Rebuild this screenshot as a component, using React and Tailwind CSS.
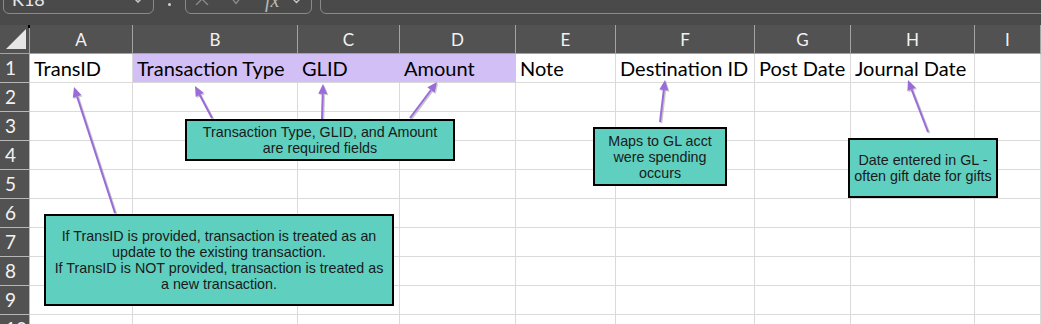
import React from "react";

const cols = [
  { l: "A", w: "w-[103px]", t: "TransID" },
  { l: "B", w: "w-[165px]", t: "Transaction Type", p: true },
  { l: "C", w: "w-[102px]", t: "GLID", p: true },
  { l: "D", w: "w-[116px]", t: "Amount", p: true },
  { l: "E", w: "w-[100px]", t: "Note" },
  { l: "F", w: "w-[139px]", t: "Destination ID" },
  { l: "G", w: "w-[96px]", t: "Post Date" },
  { l: "H", w: "w-[124px]", t: "Journal Date" },
  { l: "I", w: "flex-1", t: "" },
];

const rows = [1, 2, 3, 4, 5, 6, 7, 8, 9, 10];

const arrows = [
  [115, 213, 74, 87],
  [212, 118, 195, 86],
  [322, 119, 323, 84],
  [410, 118, 437, 82],
  [660, 122, 665, 80],
  [928, 132, 908, 80],
];

function Arrow({ a }) {
  const [x1, y1, x2, y2] = a;
  const dx = x2 - x1;
  const dy = y2 - y1;
  const L = Math.hypot(dx, dy);
  const ux = dx / L;
  const uy = dy / L;
  const bx = x2 - ux * 10;
  const by = y2 - uy * 10;
  const px = -uy * 4.5;
  const py = ux * 4.5;
  const pts = `${x2},${y2} ${bx + px},${by + py} ${bx - px},${by - py}`;
  const spts = `${x2 + 1.2},${y2 + 1.2} ${bx + px + 1.2},${by + py + 1.2} ${bx - px + 1.2},${by - py + 1.2}`;
  return (
    <g>
      <line x1={x1 + 1.2} y1={y1 + 1.2} x2={bx + 1.2} y2={by + 1.2} stroke="#9a9a9a" strokeOpacity="0.55" strokeWidth="2.2" />
      <polygon points={spts} fill="#9a9a9a" fillOpacity="0.5" />
      <line x1={x1} y1={y1} x2={bx} y2={by} stroke="#9b6bd9" strokeWidth="2" />
      <polygon points={pts} fill="#9b6bd9" />
    </g>
  );
}

function Callout({ className, children }) {
  return (
    <div
      className={`absolute border-2 border-black bg-[#5fcfbf] flex items-center justify-center text-center text-[14.3px] leading-[16px] text-[#1a1a1a] ${className}`}
      style={{ fontFamily: '"Liberation Sans", Arial, sans-serif' }}
    >
      {children}
    </div>
  );
}

export default function App() {
  return (
    <div
      className="relative w-[1041px] h-[324px] overflow-hidden bg-white"
      style={{ fontFamily: 'Lato, "Noto Sans", sans-serif' }}
    >
      {/* Formula bar */}
      <div className="h-[25px] bg-[#4a4a4a] flex items-start">
        <div className="ml-[3px] -mt-[12px] h-[26px] w-[151px] rounded-[6px] border border-[#8a8a8a] flex items-end justify-between pl-[8px] pr-[10px] pb-[5px]">
          <span className="text-[18px] leading-none text-[#e8e8e8]">K18</span>
          <svg width="10" height="6" viewBox="0 0 10 6" className="mb-[5px]">
            <path d="M1 1 L5 5 L9 1" stroke="#c8c8c8" strokeWidth="1.5" fill="none" />
          </svg>
        </div>
        <div className="ml-[14px] mt-[3px] w-[3px] h-[3px] rounded-full bg-[#d0d0d0]" />
        <div className="ml-[14px] -mt-[12px] h-[26px] w-[127px] rounded-[6px] border border-[#8a8a8a] flex items-end pl-[8px]">
          <svg width="16" height="12" viewBox="0 0 16 12" className="mb-[8px]">
            <path d="M2 0 L14 12 M14 0 L2 12" stroke="#8e8e8e" strokeWidth="1.3" fill="none" />
          </svg>
          <svg width="14" height="10" viewBox="0 0 14 10" className="ml-[19px] mb-[8px]">
            <path d="M1 1 L7 8.5 L13 1" stroke="#8e8e8e" strokeWidth="1.3" fill="none" />
          </svg>
          <span
            className="ml-[22px] mb-[3px] italic text-[20px] leading-none text-[#b8b8b8]"
            style={{ fontFamily: '"Liberation Serif", serif' }}
          >
            fx
          </span>
          <svg width="7" height="5" viewBox="0 0 7 5" className="ml-[14px] mb-[9px]">
            <path d="M0.5 0.5 L3.5 3.5 L6.5 0.5" stroke="#c8c8c8" strokeWidth="1.3" fill="none" />
          </svg>
        </div>
        <div className="ml-[8px] -mt-[12px] h-[26px] flex-1 -mr-[10px] rounded-[6px] border border-[#8a8a8a]" />
      </div>

      {/* Column header row */}
      <div className="h-[29px] flex bg-[#525252] border-b border-[#a3a3a3]">
        <div className="w-[30px] h-full border-r border-[#a3a3a3] relative">
          <div className="absolute left-[28px] top-0 w-[2px] h-[3px] bg-black" />
          <svg width="22" height="21" viewBox="0 0 22 21" className="absolute left-[5px] top-[4px]">
            <polygon points="21,0 21,20 1,20" fill="#e6e6e6" />
          </svg>
        </div>
        {cols.map((c) => (
          <div
            key={c.l}
            className={`${c.w} h-full border-r border-[#a3a3a3] flex items-center justify-center text-[17px] text-[#f2f2f2] pt-[2px]`}
          >
            {c.l}
          </div>
        ))}
      </div>

      {/* Grid rows */}
      {rows.map((r) => (
        <div key={r} className="h-[29px] flex">
          <div className="w-[30px] h-full bg-[#525252] border-r border-b border-[#b8b8b8] flex items-center pl-[5px] text-[19px] text-[#f2f2f2]">
            {r}
          </div>
          {cols.map((c) => (
            <div
              key={c.l}
              className={`${c.w} h-full border-b flex items-center pl-[4px] whitespace-nowrap text-[20px] text-black ${
                r === 1 && c.p
                  ? "bg-[#d2bff6] border-r border-r-[#d2bff6] border-b-[#d9d9d9]"
                  : "border-r border-[#dadada]"
              }`}
            >
              {r === 1 ? c.t : ""}
            </div>
          ))}
        </div>
      ))}

      {/* Arrows */}
      <svg className="absolute left-0 top-0 pointer-events-none" width="1041" height="324">
        {arrows.map((a, i) => (
          <Arrow key={i} a={a} />
        ))}
      </svg>

      {/* Callouts */}
      <Callout className="left-[185px] top-[119px] w-[270px] h-[42px]">
        <div>
          Transaction Type, GLID, and Amount
          <br />
          are required fields
        </div>
      </Callout>
      <Callout className="left-[593px] top-[127px] w-[134px] h-[59px]">
        <div>
          Maps to GL acct
          <br />
          were spending
          <br />
          occurs
        </div>
      </Callout>
      <Callout className="left-[848px] top-[138px] w-[150px] h-[60px]">
        <div>
          Date entered in GL -
          <br />
          often gift date for gifts
        </div>
      </Callout>
      <Callout className="left-[44px] top-[214px] w-[350px] h-[92px]">
        <div>
          If TransID is provided, transaction is treated as an
          <br />
          update to the existing transaction.
          <br />
          If TransID is NOT provided, transaction is treated as
          <br />a new transaction.
        </div>
      </Callout>
    </div>
  );
}
